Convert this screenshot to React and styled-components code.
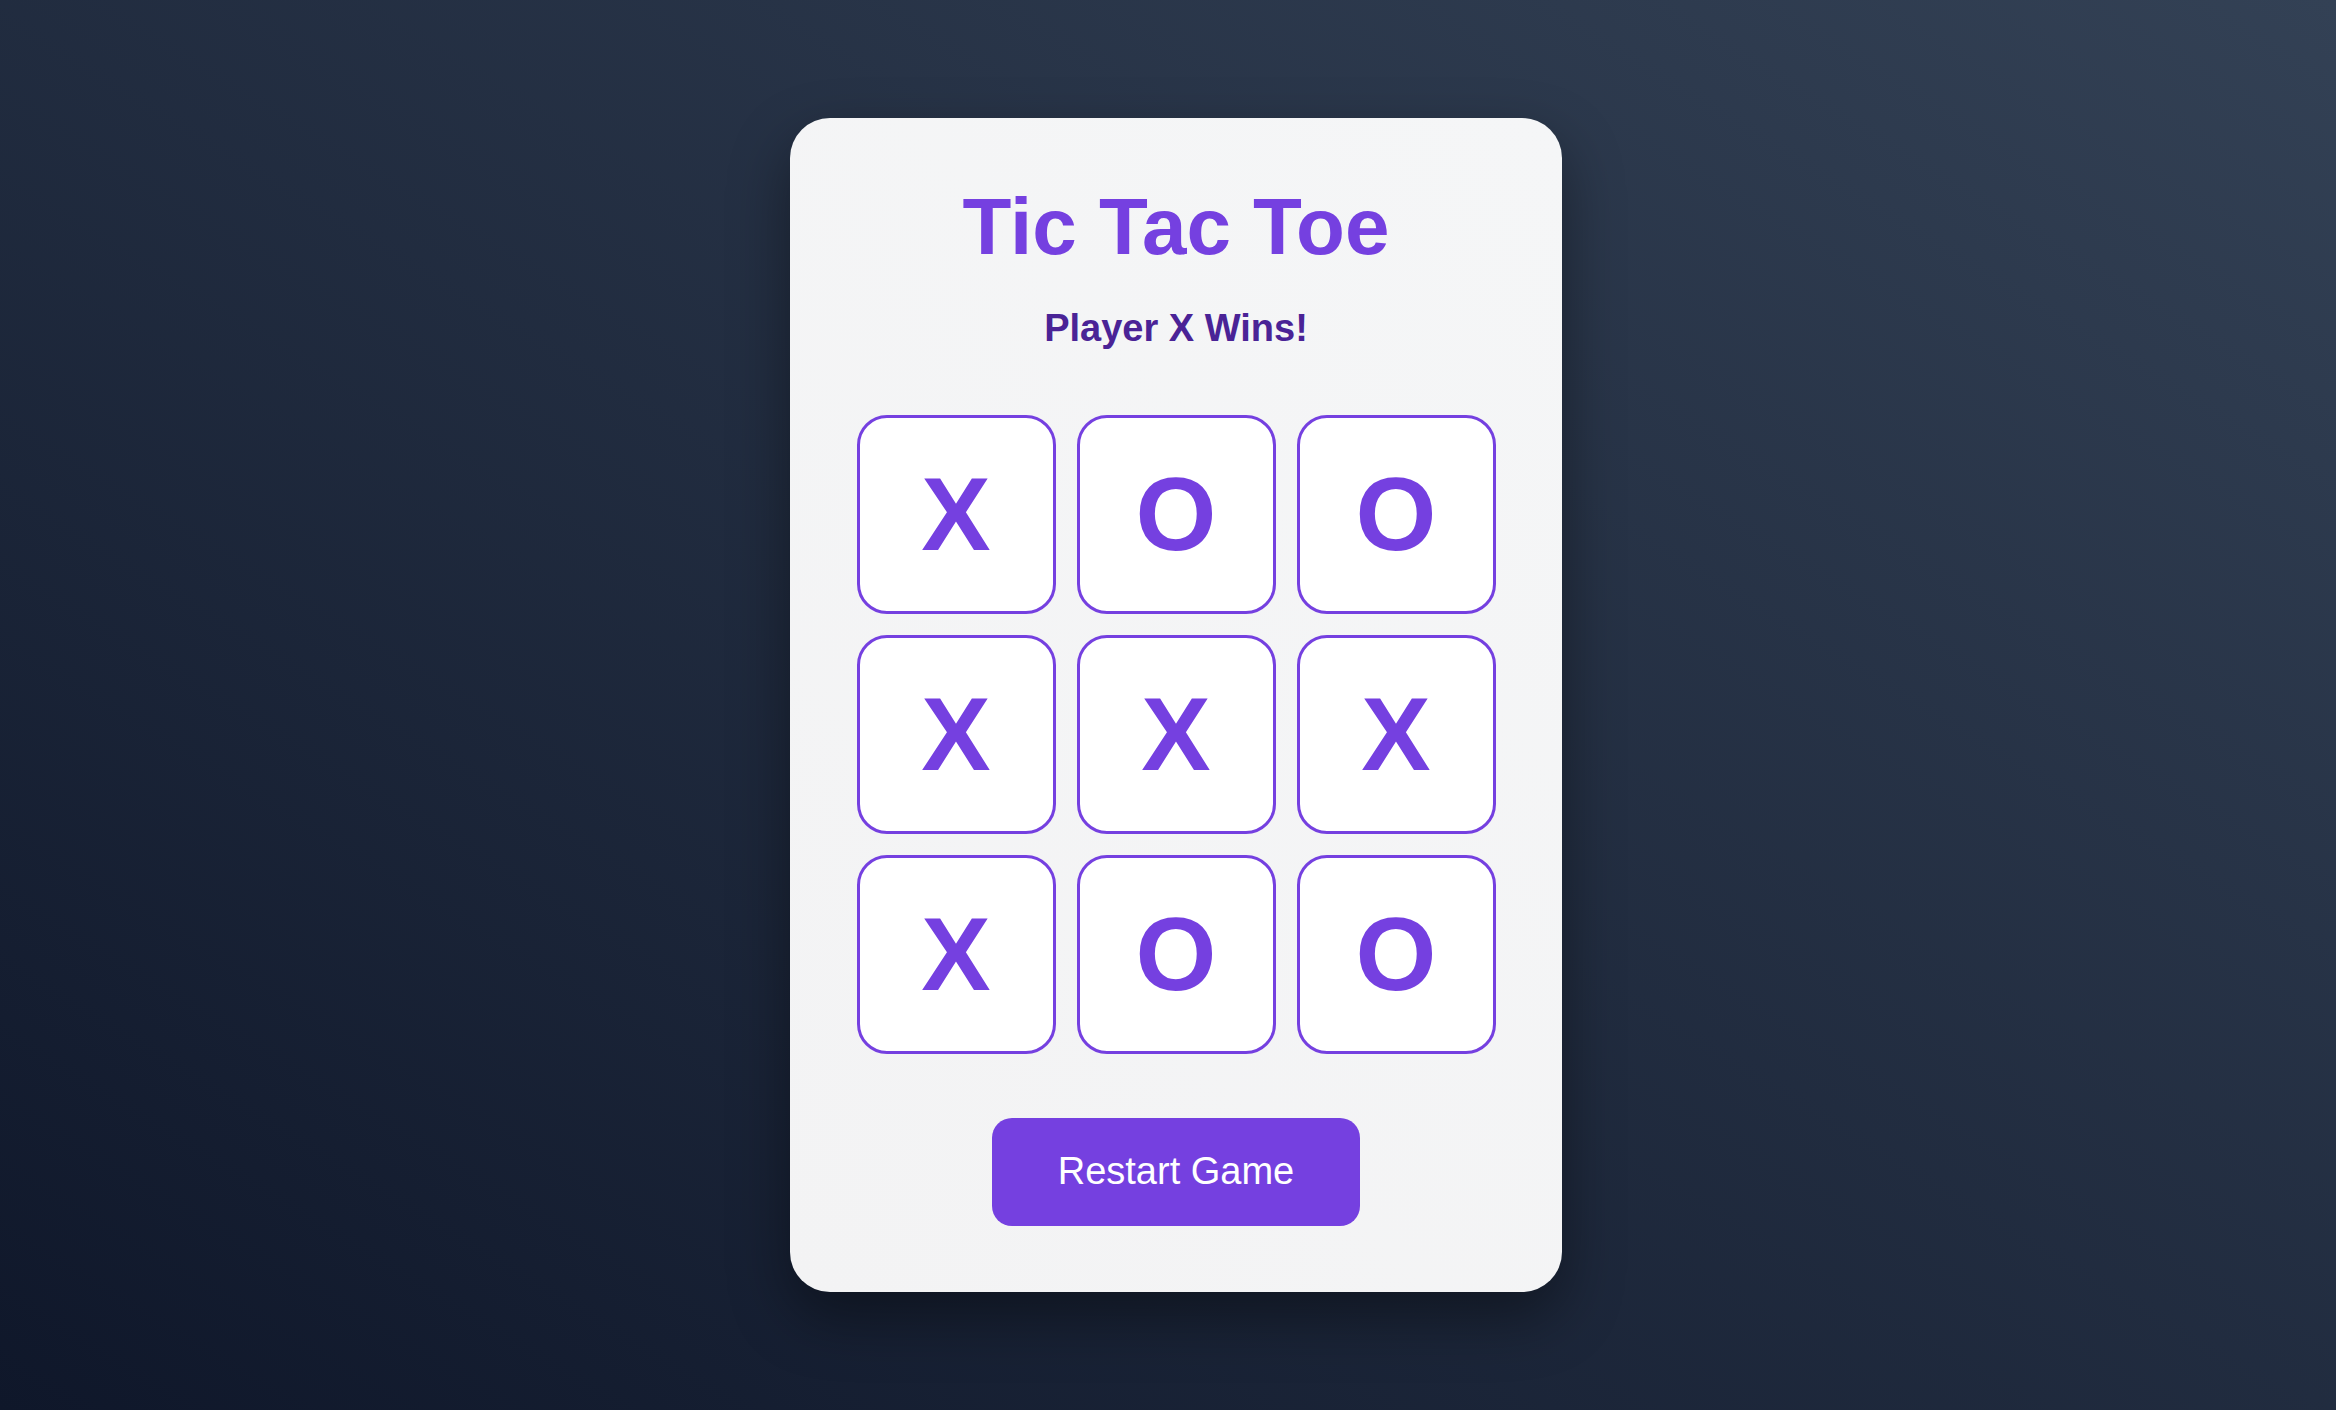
import React, { useState } from "react";
import styled, { createGlobalStyle } from "styled-components";

const GlobalStyle = createGlobalStyle`
  html, body {
    margin: 0;
    padding: 0;
  }
  body {
    font-family: "Liberation Sans", Arial, sans-serif;
    background: linear-gradient(to top right, #0f172a, #334155);
    min-height: 100vh;
  }
`;

const Page = styled.div`
  display: flex;
  justify-content: center;
  align-items: center;
  min-height: 100vh;
  padding-left: 16px;
  box-sizing: border-box;
`;

const Card = styled.div`
  display: flex;
  flex-direction: column;
  align-items: center;
  width: 772px;
  box-sizing: border-box;
  padding: 63px 66px 66px;
  border-radius: 40px;
  background: linear-gradient(225deg, #f5f6f7, #f3f3f4);
  box-shadow: 0 25px 60px rgba(0, 0, 0, 0.4);
`;

const Title = styled.h1`
  margin: 0;
  font-size: 80px;
  font-weight: 700;
  line-height: 1.15;
  color: #7540e0;
`;

const Status = styled.div`
  margin-top: 34px;
  font-size: 38px;
  font-weight: 700;
  line-height: 1.15;
  color: #4a2396;
`;

const Board = styled.div`
  display: grid;
  grid-template-columns: repeat(3, 199px);
  grid-auto-rows: 199px;
  gap: 21px;
  margin-top: 64px;
`;

const Cell = styled.button`
  display: flex;
  align-items: center;
  justify-content: center;
  padding: 0;
  box-sizing: border-box;
  border: 3px solid #7540e0;
  border-radius: 30px;
  background: #ffffff;
  font-family: "Liberation Sans", Arial, sans-serif;
  font-size: 104px;
  font-weight: 700;
  color: #7540e0;
  cursor: pointer;
`;

const RestartButton = styled.button`
  margin-top: 64px;
  width: 368px;
  height: 108px;
  border: none;
  border-radius: 20px;
  background: #7540e0;
  color: #ffffff;
  font-family: "Liberation Sans", Arial, sans-serif;
  font-size: 38px;
  cursor: pointer;
`;

const initialBoard = ["X", "O", "O", "X", "X", "X", "X", "O", "O"];

export default function App() {
  const [squares, setSquares] = useState(initialBoard);

  return (
    <>
      <GlobalStyle />
      <Page>
        <Card>
          <Title>Tic Tac Toe</Title>
          <Status>Player X Wins!</Status>
          <Board>
            {squares.map((value, i) => (
              <Cell key={i}>{value}</Cell>
            ))}
          </Board>
          <RestartButton onClick={() => setSquares(Array(9).fill(""))}>
            Restart Game
          </RestartButton>
        </Card>
      </Page>
    </>
  );
}
